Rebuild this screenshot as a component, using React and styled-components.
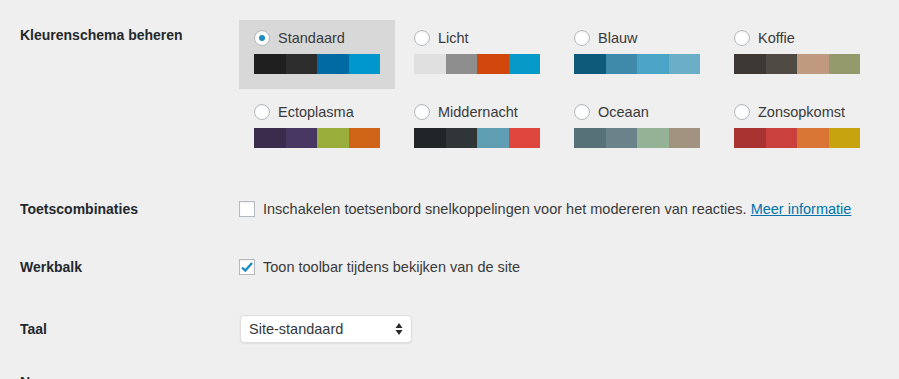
import styled, { createGlobalStyle } from "styled-components";

const GlobalStyle = createGlobalStyle`
  html, body {
    margin: 0;
    padding: 0;
    background: #efefef;
  }
  body {
    font-family: "Liberation Sans", Arial, sans-serif;
    font-size: 14.5px;
    color: #444;
    overflow: hidden;
  }
`;

const schemes = [
  { name: "Standaard", colors: ["#1f1f1f", "#2d2d2d", "#006aa3", "#0098cc"], selected: true },
  { name: "Licht", colors: ["#e0e0e0", "#8e8e8e", "#d0460b", "#069ac8"] },
  { name: "Blauw", colors: ["#0d5a7a", "#3f8aaa", "#4aa4c6", "#6aaec8"] },
  { name: "Koffie", colors: ["#3d3835", "#504a45", "#c09a7e", "#959a6c"] },
  { name: "Ectoplasma", colors: ["#3b2b4d", "#483763", "#9aae3c", "#cf6416"] },
  { name: "Middernacht", colors: ["#222527", "#303538", "#5e9db2", "#dd453d"] },
  { name: "Oceaan", colors: ["#577178", "#6a838b", "#95b196", "#a29280"] },
  { name: "Zonsopkomst", colors: ["#a93330", "#c9403d", "#d97535", "#c6a30f"] },
];

const Page = styled.main`
  padding: 5px 0 0 20px;
`;

const Row = styled.section`
  display: flex;
  align-items: ${({ $top }) => ($top ? "flex-start" : "center")};
  padding: ${({ $pad }) => $pad || "15px 0"};
`;

const Label = styled.div`
  width: 219px;
  flex-shrink: 0;
  font-size: 14px;
  font-weight: bold;
  color: #23282d;
  line-height: 18px;
  margin-top: ${({ $offset }) => $offset || 0}px;
`;

const SchemeGrid = styled.div`
  display: grid;
  grid-template-columns: repeat(4, 156px);
  column-gap: 4px;
  row-gap: 5px;
`;

const SchemeOption = styled.label`
  box-sizing: border-box;
  height: 69px;
  padding: 6px 15px 15px;
  background: ${({ $selected }) => ($selected ? "#d8d8d8" : "transparent")};
`;

const OptionHead = styled.div`
  display: flex;
  align-items: center;
  gap: 8px;
  height: 23px;
  margin-bottom: 5px;
`;

const Radio = styled.span`
  box-sizing: border-box;
  width: 16px;
  height: 16px;
  border-radius: 50%;
  border: 1px solid #b4b9be;
  background: #fff;
  box-shadow: inset 0 1px 2px rgba(0, 0, 0, 0.07);
  display: flex;
  align-items: center;
  justify-content: center;

  &::after {
    content: "";
    display: ${({ $checked }) => ($checked ? "block" : "none")};
    width: 6px;
    height: 6px;
    border-radius: 50%;
    background: #1e8cbe;
  }
`;

const OptionName = styled.span`
  color: #3a3a3a;
`;

const Swatches = styled.div`
  display: flex;
  height: 20px;
  width: 126px;
`;

const Swatch = styled.span`
  flex: 1;
  background: ${({ $color }) => $color};
`;

const CheckLine = styled.label`
  display: flex;
  align-items: center;
  gap: 8px;
  height: 28px;
  color: #3a3a3a;
`;

const Checkbox = styled.span`
  box-sizing: border-box;
  width: 16px;
  height: 16px;
  border: 1px solid #b4b9be;
  background: #fff;
  box-shadow: inset 0 1px 2px rgba(0, 0, 0, 0.07);
  display: flex;
  align-items: center;
  justify-content: center;
`;

const Link = styled.a`
  color: #0073aa;
  text-decoration: underline;
  margin-left: 4px;
`;

const Select = styled.div`
  box-sizing: border-box;
  width: 172px;
  height: 28px;
  margin: 3px 0 3px 1px;
  padding: 0 8px;
  background: #fff;
  border: 1px solid #ddd;
  border-radius: 4px;
  box-shadow: 0 1px 2px rgba(0, 0, 0, 0.07);
  display: flex;
  align-items: center;
  justify-content: space-between;
  color: #32373c;
`;

function Check() {
  return (
    <svg width="14" height="12" viewBox="0 0 14 12">
      <path d="M2 6.5 L5.3 9.6 L12 2" fill="none" stroke="#1e8cbe" strokeWidth="2.4" />
    </svg>
  );
}

function Arrows() {
  return (
    <svg width="8" height="14" viewBox="0 0 8 14">
      <path d="M4 1 L7.5 6 H0.5 Z M4 13 L7.5 8 H0.5 Z" fill="#2a2a2a" />
    </svg>
  );
}

export default function App() {
  return (
    <>
      <GlobalStyle />
      <Page>
        <Row $top $pad="15px 0 17px">
          <Label $offset={6}>Kleurenschema beheren</Label>
          <SchemeGrid>
            {schemes.map((s) => (
              <SchemeOption key={s.name} $selected={s.selected}>
                <OptionHead>
                  <Radio $checked={s.selected} />
                  <OptionName>{s.name}</OptionName>
                </OptionHead>
                <Swatches>
                  {s.colors.map((c) => (
                    <Swatch key={c} $color={c} />
                  ))}
                </Swatches>
              </SchemeOption>
            ))}
          </SchemeGrid>
        </Row>
        <Row>
          <Label>Toetscombinaties</Label>
          <CheckLine>
            <Checkbox />
            <span>
              Inschakelen toetsenbord snelkoppelingen voor het modereren van reacties.
              <Link href="#">Meer informatie</Link>
            </span>
          </CheckLine>
        </Row>
        <Row>
          <Label>Werkbalk</Label>
          <CheckLine>
            <Checkbox>
              <Check />
            </Checkbox>
            <span>Toon toolbar tijdens bekijken van de site</span>
          </CheckLine>
        </Row>
        <Row $pad="16px 0 15px">
          <Label>Taal</Label>
          <Select>
            <span>Site-standaard</span>
            <Arrows />
          </Select>
        </Row>
        <Row $top $pad="0">
          <Label $offset={12}>Naam</Label>
        </Row>
      </Page>
    </>
  );
}
